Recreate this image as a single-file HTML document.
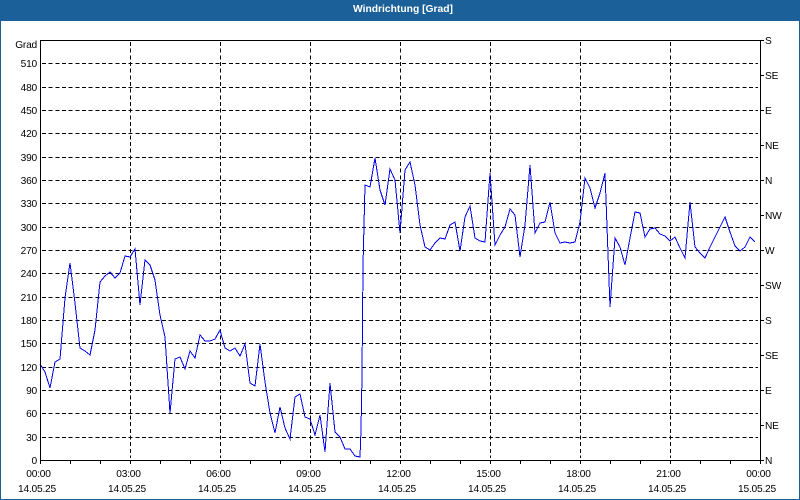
<!DOCTYPE html>
<html>
<head>
<meta charset="utf-8">
<style>
html,body{margin:0;padding:0;width:800px;height:500px;overflow:hidden;background:#fff}
svg{display:block}
text{font-family:"Liberation Sans",sans-serif;font-size:10.2px;letter-spacing:-0.22px;fill:#000}
.r{text-anchor:end}
.m{text-anchor:middle}
</style>
</head>
<body>
<svg width="800" height="500" viewBox="0 0 800 500" xmlns="http://www.w3.org/2000/svg">
<rect x="0.5" y="0.5" width="799" height="499" fill="#fff" stroke="#1b6098" stroke-width="1"/>
<rect x="0" y="0" width="800" height="21" fill="#1b6098"/>
<text x="403" y="12" class="m" style="font-weight:bold;font-size:10.3px;letter-spacing:0;fill:#fff">Windrichtung [Grad]</text>

<g stroke="#000" stroke-width="1" stroke-dasharray="4 2.67" fill="none" shape-rendering="crispEdges">
<path d="M42 63.5H758M42 87.5H758M42 110.5H758M42 133.5H758M42 157.5H758M42 180.5H758M42 203.5H758M42 227.5H758M42 250.5H758M42 273.5H758M42 297.5H758M42 320.5H758M42 343.5H758M42 367.5H758M42 390.5H758M42 413.5H758M42 437.5H758"/>
<path d="M130.5 42V458M220.5 42V458M310.5 42V458M400.5 42V458M490.5 42V458M580.5 42V458M670.5 42V458"/>
</g>

<polyline fill="none" stroke="#0000ee" stroke-width="1" shape-rendering="crispEdges" points="40,364 45,372 50,388 55,362 60,359 65,298 70,263 75,303 80,348 85,351 90,355 95,330 100,282 105,276 110,272 115,278 120,273 125,256 130,257 135,249 140,305 145,260 150,265 155,280 160,315 165,337 170,413 175,359 180,357 185,369 190,351 195,358 200,335 205,341 210,341 215,339 220,330 225,348 230,351 235,348 240,356 245,344 250,383 255,386 260,344 265,382 270,413 275,433 280,407 285,428 290,439 295,397 300,394 305,417 310,419 315,435 320,415 325,452 330,383 335,432 340,437 345,449 350,449 355,456 360,457 361,430 362,375 363,265 365,185 370,187 375,158 380,190 385,205 390,169 395,180 400,233 405,170 410,162 415,185 420,225 425,247 430,250 435,243 440,238 445,239 450,225 455,222 460,251 465,217 470,206 475,238 480,241 485,242 490,173 495,245 500,235 505,227 510,209 515,215 520,257 525,225 530,165 535,233 540,223 545,222 550,202 555,233 560,243 565,242 570,243 575,242 580,222 585,178 590,188 595,208 600,193 605,173 610,307 615,238 620,247 625,265 630,238 635,212 640,213 645,237 650,229 655,228 660,234 665,236 670,241 675,237 680,248 685,258 690,202 695,247 700,253 705,258 710,247 715,237 720,227 725,217 730,232 735,246 740,251 745,247 750,237 755,242"/>

<g stroke="#000" stroke-width="1" fill="none" shape-rendering="crispEdges">
<rect x="40.5" y="40.5" width="720" height="420"/>
<path d="M40.5 461V464M70.5 461V464M100.5 461V464M130.5 461V464M160.5 461V464M190.5 461V464M220.5 461V464M250.5 461V464M280.5 461V464M310.5 461V464M340.5 461V464M370.5 461V464M400.5 461V464M430.5 461V464M460.5 461V464M490.5 461V464M520.5 461V464M550.5 461V464M580.5 461V464M610.5 461V464M640.5 461V464M670.5 461V464M700.5 461V464M730.5 461V464M760.5 461V464"/>
<path d="M761 40.5H764M761 75.5H764M761 110.5H764M761 145.5H764M761 180.5H764M761 215.5H764M761 250.5H764M761 285.5H764M761 320.5H764M761 355.5H764M761 390.5H764M761 425.5H764M761 460.5H764"/>
</g>

<g>
<text class="r" x="37" y="48">Grad</text>
<text class="r" x="37" y="67">510</text>
<text class="r" x="37" y="91">480</text>
<text class="r" x="37" y="114">450</text>
<text class="r" x="37" y="137">420</text>
<text class="r" x="37" y="161">390</text>
<text class="r" x="37" y="184">360</text>
<text class="r" x="37" y="207">330</text>
<text class="r" x="37" y="231">300</text>
<text class="r" x="37" y="254">270</text>
<text class="r" x="37" y="277">240</text>
<text class="r" x="37" y="301">210</text>
<text class="r" x="37" y="324">180</text>
<text class="r" x="37" y="347">150</text>
<text class="r" x="37" y="371">120</text>
<text class="r" x="37" y="394">90</text>
<text class="r" x="37" y="417">60</text>
<text class="r" x="37" y="441">30</text>
<text class="r" x="37" y="464">0</text>
</g>

<g>
<text x="765" y="44">S</text>
<text x="765" y="79">SE</text>
<text x="765" y="114">E</text>
<text x="765" y="149">NE</text>
<text x="765" y="184">N</text>
<text x="765" y="219">NW</text>
<text x="765" y="254">W</text>
<text x="765" y="289">SW</text>
<text x="765" y="324">S</text>
<text x="765" y="359">SE</text>
<text x="765" y="394">E</text>
<text x="765" y="429">NE</text>
<text x="765" y="464">N</text>
</g>

<g>
<text class="m" x="38.5" y="477">00:00</text><text class="m" x="37" y="492">14.05.25</text>
<text class="m" x="128.5" y="477">03:00</text><text class="m" x="127" y="492">14.05.25</text>
<text class="m" x="218.5" y="477">06:00</text><text class="m" x="217" y="492">14.05.25</text>
<text class="m" x="308.5" y="477">09:00</text><text class="m" x="307" y="492">14.05.25</text>
<text class="m" x="398.5" y="477">12:00</text><text class="m" x="397" y="492">14.05.25</text>
<text class="m" x="488.5" y="477">15:00</text><text class="m" x="487" y="492">14.05.25</text>
<text class="m" x="578.5" y="477">18:00</text><text class="m" x="577" y="492">14.05.25</text>
<text class="m" x="668.5" y="477">21:00</text><text class="m" x="667" y="492">14.05.25</text>
<text class="m" x="758.5" y="477">00:00</text><text class="m" x="757" y="492">15.05.25</text>
</g>
</svg>
</body>
</html>
